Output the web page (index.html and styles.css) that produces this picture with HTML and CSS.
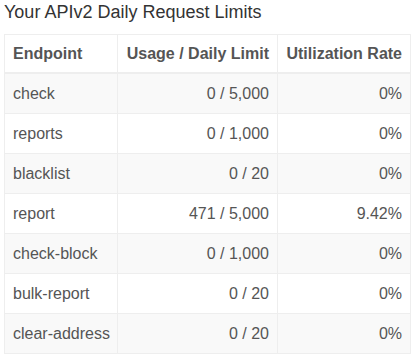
FILE: index.html
```html
<!DOCTYPE html>
<html lang="en">
<head>
    <meta charset="UTF-8">
    <meta name="viewport" content="width=device-width, initial-scale=1.0">
    <title>API Limits</title>
    <link rel="stylesheet" href="styles.css">
</head>
<body>
    <div class="limits">
        <h3>Your APIv2 Daily Request Limits</h3>
        <table class="limits-table">
            <colgroup>
                <col class="col-endpoint">
                <col class="col-usage">
                <col class="col-rate">
            </colgroup>
            <thead>
                <tr>
                    <th>Endpoint</th>
                    <th class="num">Usage / Daily Limit</th>
                    <th class="num">Utilization Rate</th>
                </tr>
            </thead>
            <tbody>
                <tr><td>check</td><td class="num">0 / 5,000</td><td class="num">0%</td></tr>
                <tr><td>reports</td><td class="num">0 / 1,000</td><td class="num">0%</td></tr>
                <tr><td>blacklist</td><td class="num">0 / 20</td><td class="num">0%</td></tr>
                <tr><td>report</td><td class="num">471 / 5,000</td><td class="num">9.42%</td></tr>
                <tr><td>check-block</td><td class="num">0 / 1,000</td><td class="num">0%</td></tr>
                <tr><td>bulk-report</td><td class="num">0 / 20</td><td class="num">0%</td></tr>
                <tr><td>clear-address</td><td class="num">0 / 20</td><td class="num">0%</td></tr>
            </tbody>
        </table>
    </div>
</body>
</html>
```

FILE: styles.css
```css
body {
    margin: 0;
    font-family: "Liberation Sans", Arial, sans-serif;
    color: #555;
    background: #fff;
}

.limits {
    padding: 0 5px 0 4px;
}

.limits h3 {
    margin: 0 0 11px 0;
    padding-top: 1px;
    font-size: 18px;
    font-weight: normal;
    line-height: 22px;
    color: #333;
}

.limits-table {
    width: 406px;
    table-layout: fixed;
    border-collapse: collapse;
    font-size: 16px;
}

.col-endpoint { width: 113px; }
.col-usage { width: 160px; }
.col-rate { width: 133px; }

.limits-table th,
.limits-table td {
    border: 1px solid #eee;
    padding: 8px;
    line-height: 23px;
    text-align: left;
    white-space: nowrap;
}

.limits-table th {
    font-weight: bold;
    padding: 7px 8px;
    border-bottom-width: 2px;
}

.limits-table .num {
    text-align: right;
}

.limits-table tbody tr:nth-child(odd) {
    background-color: #f9f9f9;
}
```
